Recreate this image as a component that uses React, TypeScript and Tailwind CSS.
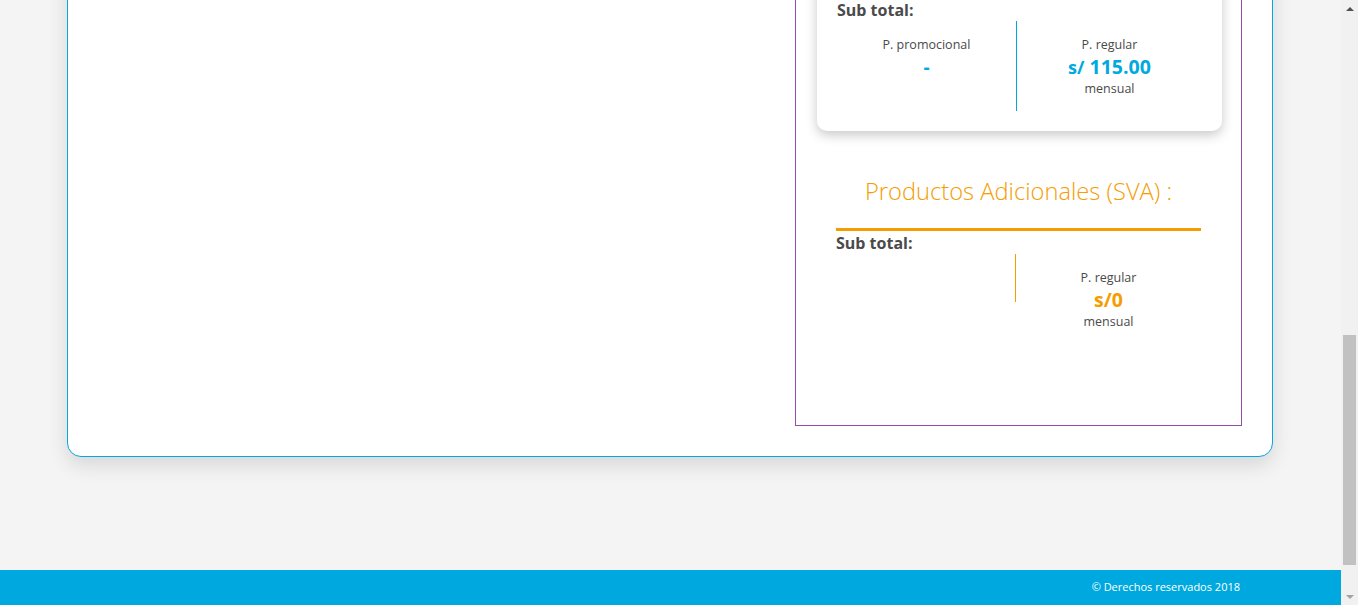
export default function App() {
  return (
    <div className="flex h-[605px] w-[1358px] overflow-hidden bg-[#f4f4f4] font-['Open_Sans',sans-serif]">
      <div className="flex h-full flex-1 flex-col">
        {/* Main card (scrolled, top above viewport) */}
        <div className="-mt-[60px] px-[67px] pr-[68px]">
          <div className="rounded-b-[14px] border border-[#00a9e0] bg-white pb-[30px] pl-[727px] pr-[30px] shadow-[0_8px_20px_rgba(0,0,0,0.12)]">
            <div className="h-[485px] border border-[#934aa8]">
              {/* Plan subtotal card */}
              <div className="mx-[21px] mr-[19px] mt-[-1px] rounded-b-[10px] bg-white px-5 pb-[20px] pt-[58px] shadow-[0_4px_12px_rgba(0,0,0,0.22)]">
                <div className="text-[16px] font-bold leading-[22px] text-[#4a4a4a]">Sub total:</div>
                <div className="flex text-[#4a4a4a]">
                  <div className="flex h-[90px] w-[179px] flex-col items-center pt-[16px]">
                    <div className="text-[12.5px] leading-[16px]">P. promocional</div>
                    <div className="text-[19px] font-bold leading-[28px] text-[#00a9e0]">-</div>
                  </div>
                  <div className="w-px bg-[#00a9e0]" />
                  <div className="flex flex-1 flex-col items-center pt-[16px]">
                    <div className="text-[12.5px] leading-[16px]">P. regular</div>
                    <div className="text-[19.5px] font-bold leading-[27px] text-[#00a9e0]">
                      <span className="text-[18px]">s/</span> 115.00
                    </div>
                    <div className="text-[12.5px] leading-[16px]">mensual</div>
                  </div>
                </div>
              </div>

              {/* Productos adicionales */}
              <div className="px-[40px]">
                <div className="mt-[44px] text-center text-[23.7px] font-light leading-[32px] text-[#f59d00]">
                  Productos Adicionales (SVA) :
                </div>
                <div className="mt-[21px] h-[3px] bg-[#f59d00]" />
                <div className="mt-[1px] text-[16px] font-bold leading-[22px] text-[#4a4a4a]">Sub total:</div>
                <div className="flex text-[#4a4a4a]">
                  <div className="h-[48px] w-[179px]" />
                  <div className="h-[48px] w-px bg-[#f59d00]" />
                  <div className="flex flex-1 flex-col items-center pt-[16px]">
                    <div className="text-[12.5px] leading-[16px]">P. regular</div>
                    <div className="text-[19.5px] font-bold leading-[28px] text-[#f59d00]">s/0</div>
                    <div className="text-[12.5px] leading-[16px]">mensual</div>
                  </div>
                </div>
              </div>
            </div>
          </div>
        </div>

        <div className="flex-1" />

        {/* Footer */}
        <footer className="flex h-[35px] items-center justify-end bg-[#00a8e0] pr-[101px] text-[11px] text-white">
          © Derechos reservados 2018
        </footer>
      </div>

      {/* Scrollbar */}
      <div className="flex w-[17px] flex-col bg-[#f1f1f1]">
        <div className="flex h-[17px] items-center justify-center">
          <div className="h-0 w-0 border-x-[4px] border-b-[4px] border-x-transparent border-b-[#505050]" />
        </div>
        <div className="flex-1 pt-[318px]">
          <div className="mx-auto h-[230px] w-[13px] bg-[#c1c1c1]" />
        </div>
        <div className="flex h-[17px] items-center justify-center">
          <div className="h-0 w-0 border-x-[4px] border-t-[4px] border-x-transparent border-t-[#a3a3a3]" />
        </div>
      </div>
    </div>
  );
}
